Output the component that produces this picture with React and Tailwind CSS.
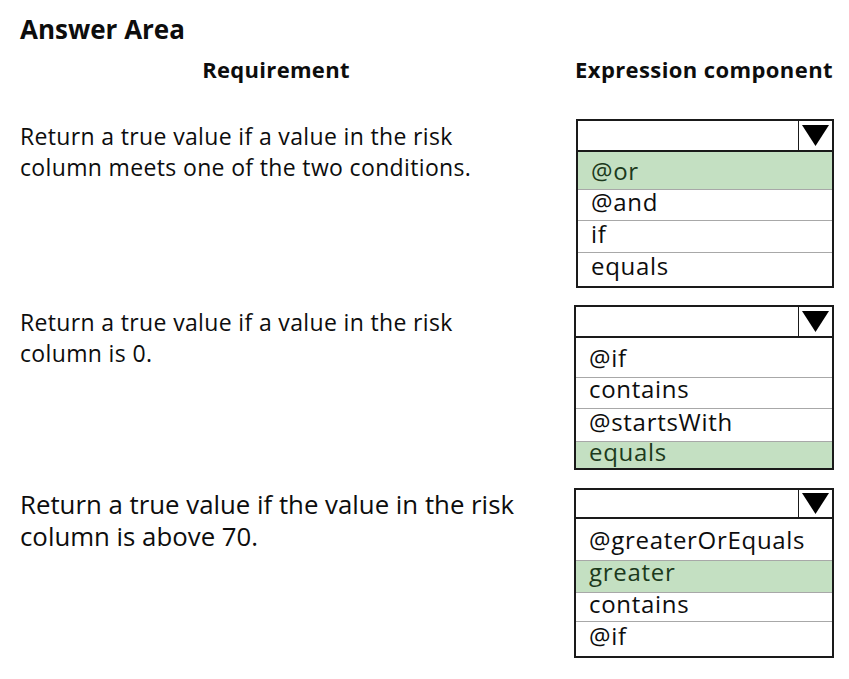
const font = { fontFamily: '"Open Sans", "Noto Sans", Arial, sans-serif' }

const questions = [
  {
    lines: ["Return a true value if a value in the risk", "column meets one of the two conditions."],
    size: "text-[23px] leading-[31px] tracking-[0.35px] pt-[2px]",
    gap: "",
    box: "ml-[2px] w-[258px]",
    header: "h-[31px]",
    rows: [
      { label: "@or", h: "h-[37px]", pt: "mt-[7px]", on: true },
      { label: "@and", h: "h-[31px]", pt: "mt-0" },
      { label: "if", h: "h-[32px]", pt: "mt-[1px]" },
      { label: "equals", h: "h-[34px]", pt: "mt-[1px]" },
    ],
  },
  {
    lines: ["Return a true value if a value in the risk", "column is 0."],
    size: "text-[23px] leading-[31px] tracking-[0.35px] pt-[2px]",
    gap: "mt-[17px]",
    box: "w-[260px]",
    header: "h-[31px]",
    rows: [
      { label: "@if", h: "h-[39px]", pt: "mt-[8px]" },
      { label: "contains", h: "h-[31px]", pt: "-mt-[1px]" },
      { label: "@startsWith", h: "h-[33px]", pt: "mt-[1px]" },
      { label: "equals", h: "h-[27px]", pt: "-mt-[2px]", on: true },
    ],
  },
  {
    lines: ["Return a true value if the value in the risk", "column is above 70."],
    size: "text-[25.8px] leading-[32px]",
    gap: "mt-[18px]",
    box: "w-[260px]",
    header: "h-[29px]",
    rows: [
      { label: "@greaterOrEquals", h: "h-[41px]", pt: "mt-[9px]" },
      { label: "greater", h: "h-[32px]", pt: "-mt-[1px]", on: true },
      { label: "contains", h: "h-[29px]", pt: "-mt-[1px]" },
      { label: "@if", h: "h-[35px]", pt: "mt-[2px]" },
    ],
  },
]

function Dropdown({ q }) {
  return (
    <div className={`${q.box} border-2 border-[#1a1a1a] bg-white`}>
      <div className={`flex ${q.header} border-b-2 border-[#1a1a1a]`}>
        <div className="flex-1" />
        <div className="w-[34px] border-l border-[#1a1a1a] flex items-center justify-center">
          <svg width="27" height="21" viewBox="0 0 27 21">
            <polygon points="0,0 27,0 13.5,21" fill="#000" />
          </svg>
        </div>
      </div>
      {q.rows.map((r, i) => (
        <div
          key={r.label}
          className={`flex flex-col ${r.h} ${i > 0 ? "border-t border-[#a8a8a8]" : ""} ${
            r.on ? "bg-[#c4e0c2] text-[#1c3a1c]" : "text-[#0d0d0d]"
          } pl-[13px] text-[24px] leading-[24px] tracking-[0.7px]`}
        >
          <div className={r.pt}>{r.label}</div>
        </div>
      ))}
    </div>
  )
}

export default function App() {
  return (
    <div className="w-[849px] h-[679px] bg-white text-[#0d0d0d] pl-[20px] pt-[13px]" style={font}>
      <h1 className="text-[26px] leading-[32px] font-bold">Answer Area</h1>
      <div className="flex mt-[8px] h-[32px] items-center">
        <div className="w-[512px] shrink-0 text-center text-[22px] leading-[32px] tracking-[0.3px] font-bold">
          Requirement
        </div>
        <div className="ml-[42px] w-[260px] shrink-0 whitespace-nowrap text-center text-[22px] leading-[32px] tracking-[0.4px] font-bold">
          Expression component
        </div>
      </div>
      <div className="mt-[34px]">
        {questions.map((q, i) => (
          <div key={i} className={`flex ${q.gap}`}>
            <div className={`w-[554px] shrink-0 ${q.size}`}>
              {q.lines.map((l) => (
                <div key={l}>{l}</div>
              ))}
            </div>
            <div className="shrink-0">
              <Dropdown q={q} />
            </div>
          </div>
        ))}
      </div>
    </div>
  )
}
